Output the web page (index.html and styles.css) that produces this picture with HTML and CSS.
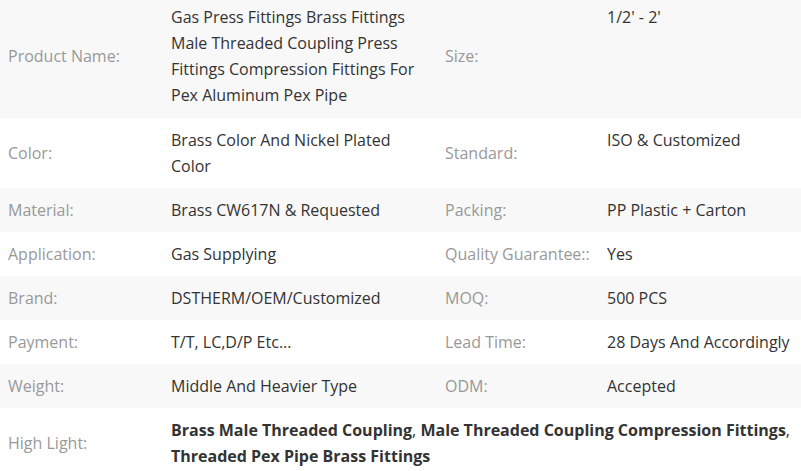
FILE: index.html
```html
<!DOCTYPE html>
<html>
<head>
<meta charset="utf-8">
<link rel="stylesheet" href="styles.css">
</head>
<body>
<div class="specs">
  <div class="row gray first">
    <div class="label">Product Name:</div>
    <div class="value">Gas Press Fittings Brass Fittings Male Threaded Coupling Press Fittings Compression Fittings For Pex Aluminum Pex Pipe</div>
    <div class="label">Size:</div>
    <div class="value top">1/2' - 2'</div>
  </div>
  <div class="row">
    <div class="label">Color:</div>
    <div class="value">Brass Color And Nickel Plated Color</div>
    <div class="label">Standard:</div>
    <div class="value top">ISO &amp; Customized</div>
  </div>
  <div class="row gray">
    <div class="label">Material:</div>
    <div class="value">Brass CW617N &amp; Requested</div>
    <div class="label">Packing:</div>
    <div class="value">PP Plastic + Carton</div>
  </div>
  <div class="row">
    <div class="label">Application:</div>
    <div class="value">Gas Supplying</div>
    <div class="label">Quality Guarantee::</div>
    <div class="value">Yes</div>
  </div>
  <div class="row gray">
    <div class="label">Brand:</div>
    <div class="value">DSTHERM/OEM/Customized</div>
    <div class="label">MOQ:</div>
    <div class="value">500 PCS</div>
  </div>
  <div class="row">
    <div class="label">Payment:</div>
    <div class="value">T/T, LC,D/P Etc...</div>
    <div class="label">Lead Time:</div>
    <div class="value">28 Days And Accordingly</div>
  </div>
  <div class="row gray">
    <div class="label">Weight:</div>
    <div class="value">Middle And Heavier Type</div>
    <div class="label">ODM:</div>
    <div class="value">Accepted</div>
  </div>
  <div class="row wide">
    <div class="label">High Light:</div>
    <div class="value span"><strong>Brass Male Threaded Coupling</strong>, <strong>Male Threaded Coupling Compression Fittings</strong>, <strong>Threaded Pex Pipe Brass Fittings</strong></div>
  </div>
</div>
</body>
</html>
```

FILE: styles.css
```css
html, body {
  margin: 0;
  padding: 0;
  background: #ffffff;
}
body {
  font-family: "Open Sans", "Noto Sans", sans-serif;
  font-size: 16px;
  line-height: 26px;
  color: #333333;
}
.specs {
  display: flex;
  flex-direction: column;
  width: 801px;
}
.row {
  display: grid;
  grid-template-columns: 163px 274px 162px 1fr;
  align-items: center;
  background: #ffffff;
}
.row.gray {
  background: #f8f8f8;
}
.label,
.value {
  padding: 9px 8px;
}
.label {
  color: #999999;
}
.value {
  color: #333333;
}
.row.first .label,
.row.first .value {
  padding-top: 4px;
  padding-bottom: 10px;
}
.value.top {
  align-self: start;
}
.row.wide .value.span {
  grid-column: 2 / 5;
  padding-right: 8px;
}
.value strong {
  font-weight: 700;
}
```
